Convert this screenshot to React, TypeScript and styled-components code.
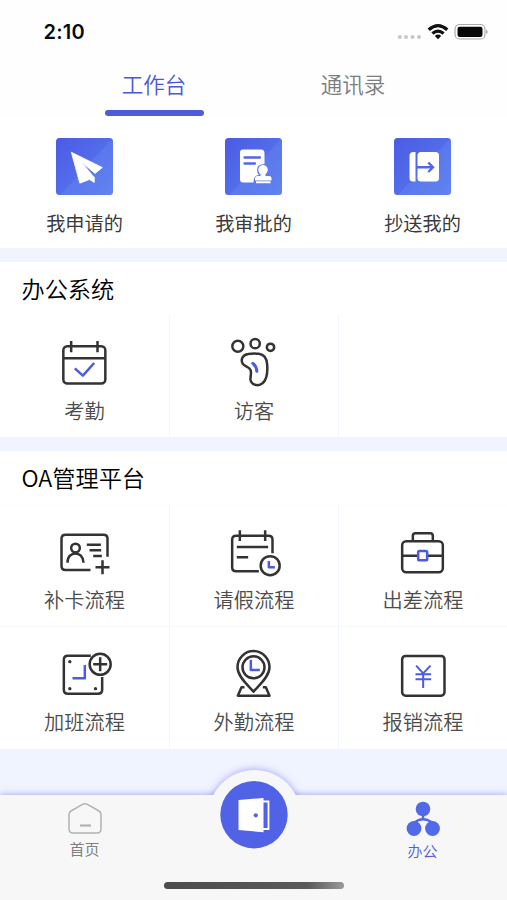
import React from "react";
import styled, { createGlobalStyle } from "styled-components";

const GlobalStyle = createGlobalStyle`
  *, *::before, *::after { box-sizing: border-box; }
  body { margin: 0; background: #fff; font-family: "Liberation Sans", "Noto Sans CJK SC", sans-serif; }
`;

const INK = "#333335";
const BLUE = "#4b5be3";

const Screen = styled.div`
  width: 507px;
  height: 900px;
  display: flex;
  flex-direction: column;
  background: #f0f4ff;
  overflow: hidden;
`;

const StatusBar = styled.header`
  height: 64px;
  flex: none;
  display: flex;
  justify-content: space-between;
  align-items: center;
  padding: 0 18px 0 43.5px;
  background: #fefefe;
`;

const Time = styled.span`
  font: 600 20px/24px Inter, sans-serif;
  letter-spacing: 0.2px;
  color: #0a0a0a;
`;

const StatusIcons = styled.svg`
  width: 92px;
  height: 20px;
  display: block;
`;

const Tabs = styled.nav`
  height: 54px;
  flex: none;
  display: flex;
  padding: 0 54.5px;
  background: #fefefe;
`;

const Tab = styled.div<{ $active?: boolean }>`
  flex: 1;
  display: flex;
  flex-direction: column;
  align-items: center;
  padding-top: 7px;
  font-size: 21.5px;
  line-height: 30px;
  font-weight: 350;
  color: ${(p) => (p.$active ? "#4a58dc" : "#7d7d7d")};
  &::after {
    content: "";
    width: 99px;
    height: 6px;
    margin-top: 8.5px;
    border-radius: 3px;
    background: ${(p) => (p.$active ? "#4d5bd8" : "transparent")};
  }
`;

const QuickRow = styled.section`
  height: 130px;
  flex: none;
  display: grid;
  grid-template-columns: repeat(3, 1fr);
  background: #fff;
`;

const QuickItem = styled.div`
  display: flex;
  flex-direction: column;
  align-items: center;
  padding-top: 20px;
  font-size: 19.2px;
  line-height: 28px;
  color: #3b3b3b;
`;

const QuickIcon = styled.svg`
  width: 57px;
  height: 57px;
  margin-bottom: 16px;
  display: block;
`;

const Panel = styled.section`
  flex: none;
  margin-top: 13.5px;
  background: #fff;
`;

const PanelTitle = styled.h2`
  height: 53.5px;
  margin: 0;
  padding-left: 21.5px;
  font-size: 23.2px;
  font-weight: 350;
  line-height: 52px;
  color: #000;
  font-family: "Noto Sans CJK SC", sans-serif;
`;

const Grid = styled.div`
  display: grid;
  grid-template-columns: repeat(3, 1fr);
  grid-auto-rows: 122.2px;
`;

const Cell = styled.div`
  display: flex;
  flex-direction: column;
  align-items: center;
  padding-top: 18px;
  border-left: 1px solid #f1f5fc;
  border-top: 1px solid #f5f8fc;
  font-size: 20.2px;
  line-height: 28px;
  font-weight: 350;
  color: #4c4c4c;
  &:nth-child(3n + 1) { border-left: 0; }
  &:nth-child(-n + 3) { border-top-color: #fcfdfe; }
`;

const CellIcon = styled.svg`
  width: 64px;
  height: 56px;
  margin: 0 1.5px 7.5px 0;
  display: block;
  fill: none;
  stroke: ${INK};
  stroke-width: 7.5;
  stroke-linejoin: round;
`;

const BottomBar = styled.footer`
  position: relative;
  margin-top: auto;
  height: 105px;
  flex: none;
  display: grid;
  grid-template-columns: repeat(3, 1fr);
  background: #f7f7f7;
  box-shadow: 0 -1px 6px rgba(110, 105, 235, 0.5);
`;

const BarItem = styled.div<{ $active?: boolean }>`
  display: flex;
  flex-direction: column;
  align-items: center;
  padding-top: ${(p) => (p.$active ? 5 : 7)}px;
  font-size: 15px;
  line-height: 22px;
  color: ${(p) => (p.$active ? "#5361d8" : "#808080")};
  font-weight: ${(p) => (p.$active ? 350 : 400)};
`;

const BarIcon = styled.svg<{ $h: number }>`
  width: 36px;
  height: ${(p) => p.$h}px;
  display: block;
  margin-bottom: 4px;
`;

const Bump = styled.div`
  position: absolute;
  left: 207.5px;
  top: -25.5px;
  width: 93px;
  height: 93px;
  border-radius: 50%;
  background: #f7f7f7;
  box-shadow: 0 -1px 7px rgba(110, 105, 235, 0.5);
  clip-path: inset(-14px -14px 67.5px -14px);
`;

const DoorButton = styled.svg`
  position: absolute;
  left: 220px;
  top: -14px;
  width: 68px;
  height: 68px;
`;

const HomeIndicator = styled.div`
  position: absolute;
  left: 164px;
  top: 87px;
  width: 180px;
  height: 7px;
  border-radius: 4px;
  background: linear-gradient(90deg, #4c4c4c, #5a5a5a 80%, #999);
`;

const QuickBackdrop = ({ id }: { id: string }) => (
  <>
    <defs>
      <linearGradient id={id} x1="0" y1="0" x2="1" y2="1">
        <stop offset="0" stopColor="#4b5be6" />
        <stop offset="1" stopColor="#5a7dee" />
      </linearGradient>
    </defs>
    <rect width="57" height="57" rx="3.5" fill={`url(#${id})`} />
    <path d="M53 4 57 2V53.500q0 3.500-3.500 3.500H4z" fill="#7292f5" opacity=".28" />
  </>
);

const cells1 = [
  {
    label: "考勤",
    box: "157.5 267 192 168",
    art: (
      <>
        <rect x="191.500" y="303.500" width="126" height="112" rx="12" />
        <path d="M192 340H317M215 288V322M294 288V322" />
        <path d="M226 370 250 392 284 354" stroke={BLUE} />
      </>
    ),
  },
  {
    label: "访客",
    box: "184.5 72 192 168",
    art: (
      <>
        <circle cx="235" cy="109" r="16.500" />
        <circle cx="287" cy="101" r="14" />
        <circle cx="333" cy="112" r="11" />
        <path d="M266 132C278 130 290 131 298 131C315 133 322 147 323 164C325 191 320 211 309 220C295 231 275 224 273 209C272 198 277 190 273 180C269 169 256 171 249 160C243 147 250 134 266 132Z" />
        <path d="M280 160Q291 169 292 184" stroke={BLUE} strokeWidth="9" strokeLinecap="round" />
      </>
    ),
  },
];

const cells2 = [
  {
    label: "补卡流程",
    box: "157.5 252 192 168",
    art: (
      <>
        <path d="M273 393H198Q186 393 186 381V299Q186 287 198 287H312Q324 287 324 299V353" />
        <circle cx="228" cy="327" r="13" />
        <path d="M204 371C204 334 251 334 252 371M262 317H304M270 334H305M281 351H307M309 364V406M288 385H330" />
      </>
    ),
  },
  {
    label: "请假流程",
    box: "184.5 72 192 168",
    art: (
      <>
        <path d="M298 217H230Q218 217 218 205V122Q218 110 230 110H327Q339 110 339 122V163M241 94V126M317 94V126M232 144H326M232 175H266" />
        <circle cx="332" cy="200" r="28.500" />
        <path d="M328 186V205H346" stroke={BLUE} />
      </>
    ),
  },
  {
    label: "出差流程",
    box: "691.5 72 192 168",
    art: (
      <>
        <rect x="728" y="127" width="122" height="93" rx="12" />
        <path d="M760 127V111Q760 103 768 103H812Q820 103 820 111V127M729 170H775M804 170H850" />
        <rect x="776" y="156" width="27" height="28" rx="4" stroke={BLUE} />
      </>
    ),
  },
  {
    label: "加班流程",
    box: "157.5 78 192 168",
    art: (
      <>
        <path d="M274 110H205Q193 110 193 122V212Q193 224 205 224H295Q308 224 308 212V174" />
        <circle cx="302" cy="136" r="31.500" />
        <path d="M302 115V157M281 136H323" />
        <path d="M256 138V178H219" stroke={BLUE} />
        <g fill={INK} stroke="none">
          <circle cx="211" cy="128" r="5" />
          <circle cx="211" cy="209" r="5" />
          <circle cx="288" cy="209" r="5" />
        </g>
      </>
    ),
  },
  {
    label: "外勤流程",
    box: "664.5 78 192 168",
    art: (
      <>
        <path d="M762 218C748 201 714 174 714 145A48 49 0 0 1 810 145C810 174 776 201 762 218Z" />
        <circle cx="762" cy="145" r="33" />
        <path d="M735 205H726L715 230H810L799 205H790" />
        <path d="M754 122V153H781" stroke={BLUE} />
      </>
    ),
  },
  {
    label: "报销流程",
    box: "421.5 78 192 168",
    art: (
      <>
        <rect x="458" y="111" width="127" height="119" rx="10" />
        <path d="M500 140 521 163 543 140M521 163V207M498 166H545M498 181H545" stroke={BLUE} strokeWidth="6" />
      </>
    ),
  },
];

export default function App() {
  return (
    <>
      <GlobalStyle />
      <Screen>
        <StatusBar>
          <Time>2:10</Time>
          <StatusIcons viewBox="0 0 92 20">
            <g fill="#c8c8c8">
              <circle cx="2.800" cy="15" r="2" />
              <circle cx="9" cy="15" r="2" />
              <circle cx="15.500" cy="15" r="2" />
              <circle cx="22" cy="15" r="2" />
            </g>
            <g fill="none" stroke="#111" strokeWidth="3.200">
              <path d="M31.700 7.700Q41 -.5 50.300 7.700" />
              <path d="M35.400 11.500Q41 6.600 46.600 11.500" />
            </g>
            <path d="M37.800 14Q41 11.200 44.200 14L41 17.300Z" fill="#111" />
            <rect x="58" y="2.500" width="30" height="14.500" rx="4.500" fill="none" stroke="#aaa" strokeWidth="1.200" />
            <rect x="60.500" y="4.700" width="25" height="10.200" rx="2.200" fill="#080808" />
            <path d="M89.300 7.500Q92 9.800 89.300 12Z" fill="#999" />
          </StatusIcons>
        </StatusBar>
        <Tabs>
          <Tab $active>工作台</Tab>
          <Tab>通讯录</Tab>
        </Tabs>
        <QuickRow>
          <QuickItem>
            <QuickIcon viewBox="0 0 57 57">
              <QuickBackdrop id="quick-apply" />
              <path d="M15.300 14.200 46.300 29.500 39 35.500 25.500 24 36.500 37.500 38.300 39V44.500L33.600 41.500 23.800 45.200Z" fill="#fff" stroke="#fff" strokeWidth=".8" strokeLinejoin="round" />
            </QuickIcon>
            我申请的
          </QuickItem>
          <QuickItem>
            <QuickIcon viewBox="0 0 57 57">
              <QuickBackdrop id="quick-approve" />
              <path d="M18 11.500H36Q39.500 11.500 39.500 15V26Q32 26 32 32Q32 35 34 37Q28.500 37 28.500 44.500H18Q15 44.500 15 41.500V14.500Q15 11.500 18 11.500Z" fill="#fff" />
              <path d="M19.500 19.500H35M19.500 25.500H30" stroke="#5267e4" strokeWidth="2.300" strokeLinecap="round" />
              <circle cx="38" cy="31.800" r="4.800" fill="#fff" />
              <path d="M35.500 35H40.500V38H44Q46.500 38 46.500 40.500V42.500H30V40.500Q30 38 32.500 38H35.500ZM31 43.200H45.500V45.300H31Z" fill="#fff" />
            </QuickIcon>
            我审批的
          </QuickItem>
          <QuickItem>
            <QuickIcon viewBox="0 0 57 57">
              <QuickBackdrop id="quick-copy" />
              <path d="M21.500 14V43.500H19Q15.500 43.500 15.500 40V18Q15.500 14 19.500 14Z" fill="#fff" />
              <rect x="23.500" y="14" width="21.500" height="29.500" rx="3.500" fill="#fff" />
              <path d="M23 29.300H38.500M34.300 24.500 39 29.300 34.300 34" fill="none" stroke="#5267e4" strokeWidth="2.400" />
            </QuickIcon>
            抄送我的
          </QuickItem>
        </QuickRow>
        <Panel>
          <PanelTitle>办公系统</PanelTitle>
          <Grid>
            {cells1.map((c) => (
              <Cell key={c.label}>
                <CellIcon viewBox={c.box}>{c.art}</CellIcon>
                {c.label}
              </Cell>
            ))}
            <Cell />
          </Grid>
        </Panel>
        <Panel>
          <PanelTitle>OA管理平台</PanelTitle>
          <Grid>
            {cells2.map((c) => (
              <Cell key={c.label}>
                <CellIcon viewBox={c.box}>{c.art}</CellIcon>
                {c.label}
              </Cell>
            ))}
          </Grid>
        </Panel>
        <BottomBar>
          <BarItem>
            <BarIcon $h={33} viewBox="0 0 36 33" fill="none" stroke="#b2b2b4" strokeWidth="1.500">
              <path d="M4 9 15.500 2.300Q18 1 20.500 2.300L32 9Q34 10.200 34 12.500V27Q34 31 30 31H6Q2 31 2 27V12.500Q2 10.200 4 9Z" />
              <path d="M13 23.500H24" strokeWidth="2.200" />
            </BarIcon>
            首页
          </BarItem>
          <BarItem />
          <BarItem $active>
            <BarIcon $h={37} viewBox="0 0 36 37">
              <g fill="#526ae8">
                <circle cx="18" cy="9" r="7.300" />
                <circle cx="9" cy="28.500" r="7.400" />
                <circle cx="27.500" cy="28.500" r="7.400" />
              </g>
              <path d="M18 15V19M9 23Q18 15.500 27.500 23" fill="none" stroke="#526ae8" strokeWidth="2.500" />
            </BarIcon>
            办公
          </BarItem>
          <Bump />
          <DoorButton viewBox="0 0 68 68">
            <circle cx="34" cy="33.700" r="33.700" fill="#5062e6" />
            <path d="M18.500 19 43.500 17V51.300L18.500 49Z" fill="#fff" />
            <path d="M43 20.500H48.500V48H43" fill="none" stroke="#fff" strokeWidth="1.800" />
            <path d="M45.300 22V46.500" stroke="#5062e6" strokeWidth="1.500" />
            <circle cx="35.800" cy="34.300" r="2.100" fill="#5062e6" />
          </DoorButton>
          <HomeIndicator />
        </BottomBar>
      </Screen>
    </>
  );
}
